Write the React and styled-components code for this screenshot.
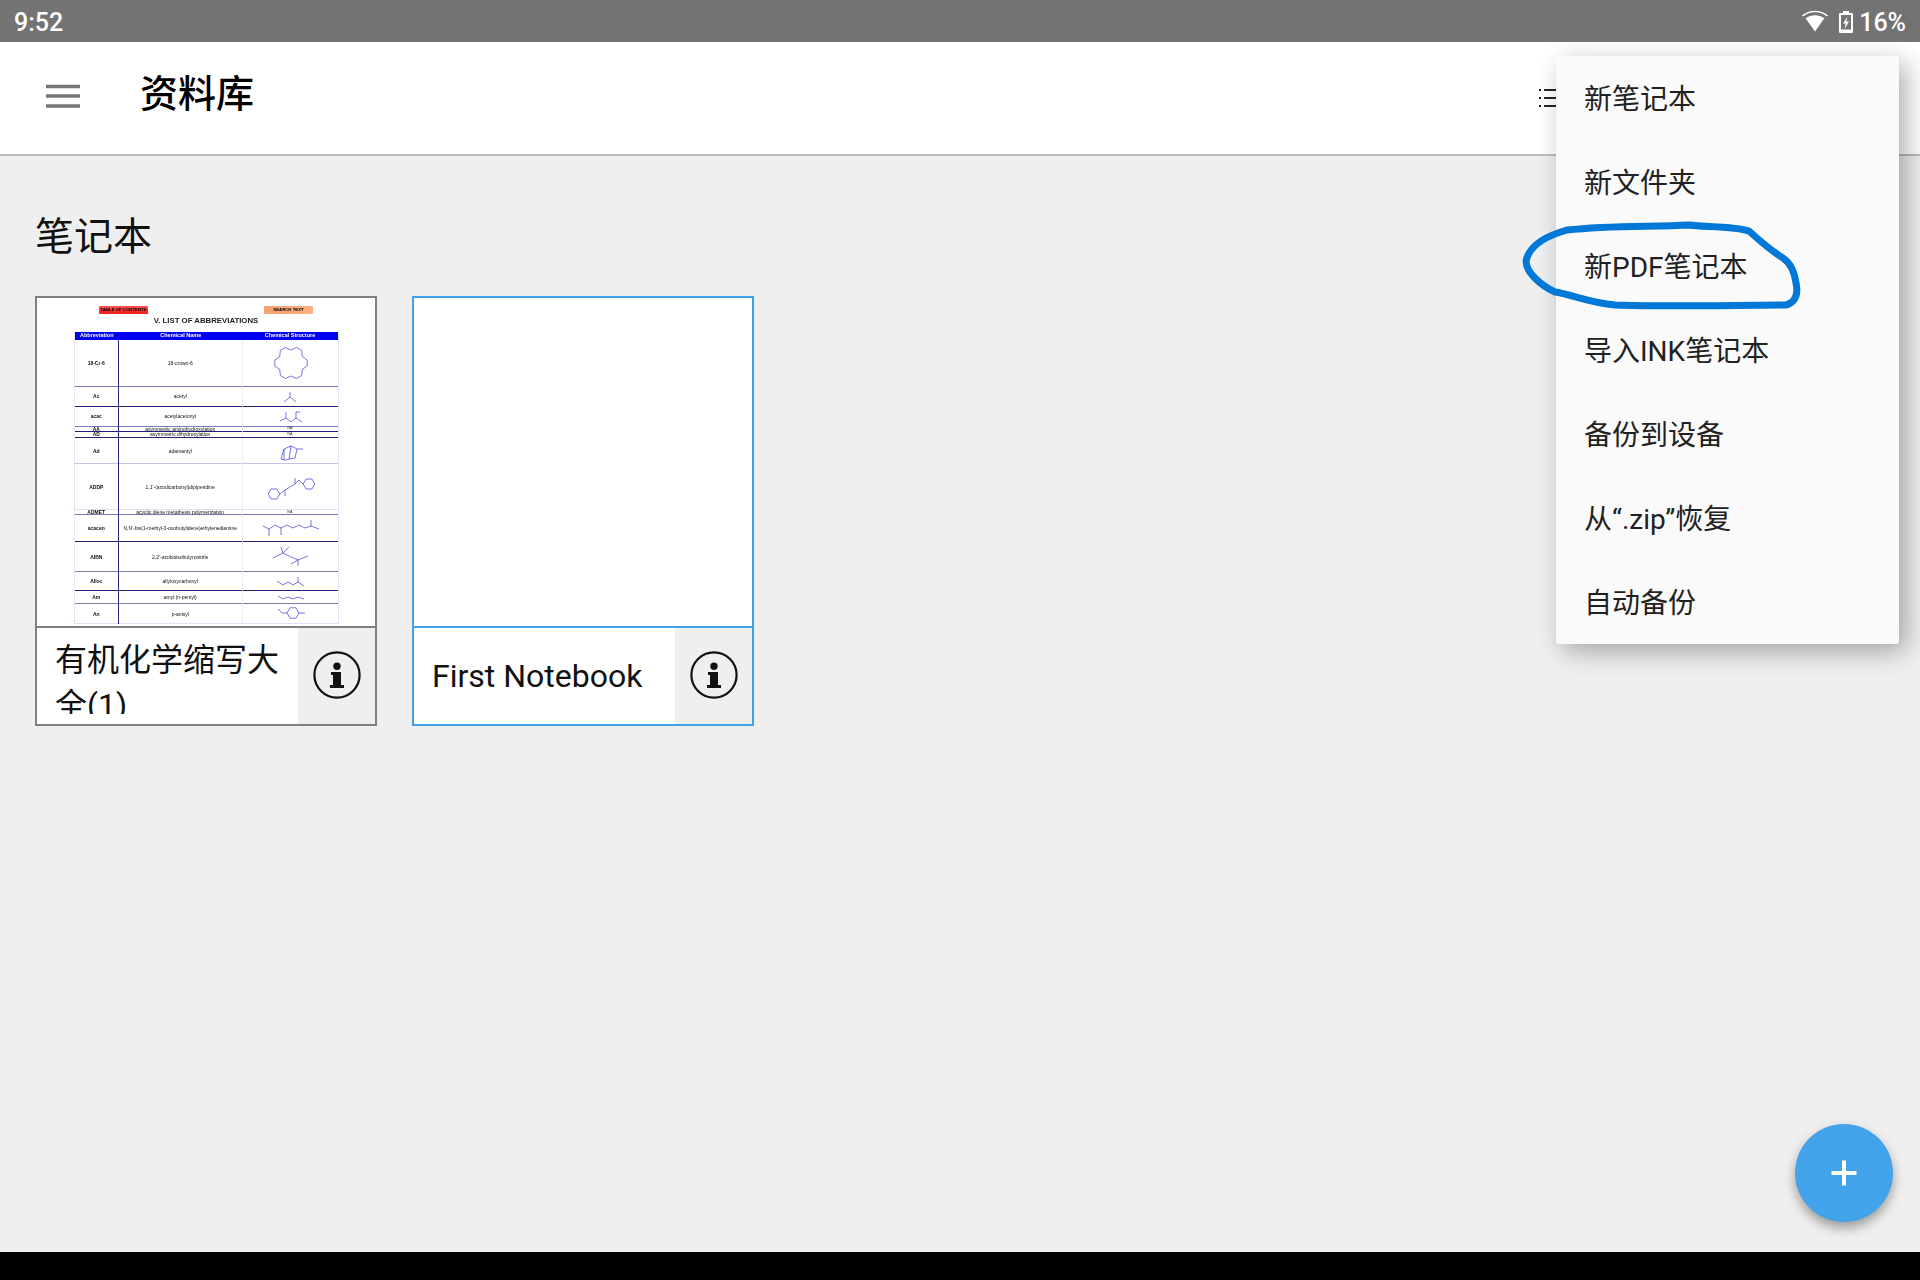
import React from "react"
import styled, { createGlobalStyle } from "styled-components"

const Global = createGlobalStyle`
  html, body {
    margin: 0;
    padding: 0;
    background: #000;
  }
  * {
    box-sizing: border-box;
  }
`

const sans = `Roboto, "Noto Sans CJK SC", sans-serif`
const doc = `"Liberation Sans", sans-serif`

const Screen = styled.div`
  position: relative;
  width: 1920px;
  height: 1280px;
  display: flex;
  flex-direction: column;
  overflow: hidden;
  font-family: ${sans};
  background: #efefef;
`

const StatusBar = styled.div`
  position: relative;
  z-index: 3;
  height: 42px;
  flex: none;
  display: flex;
  align-items: center;
  justify-content: space-between;
  padding: 2px 14px 0;
  background: #737373;
  color: #fff;
  font-size: 25px;
  font-weight: 500;
`

const StatusIcons = styled.div`
  display: flex;
  align-items: center;
  gap: 6px;
`

const WifiSvg = styled.svg`
  margin: 0 5px 2px 0;
  display: block;
`

const AppBar = styled.header`
  height: 114px;
  flex: none;
  display: flex;
  align-items: center;
  padding: 0 357px 0 46px;
  background: #fff;
  border-bottom: 2px solid #bdbdbd;
`

const MenuIcon = styled.svg`
  display: block;
  margin-bottom: 4px;
`

const Title = styled.h1`
  margin: 0 0 9px 60px;
  font-size: 38px;
  font-weight: 500;
  line-height: 1;
  color: #000;
`

const ListButton = styled.svg`
  margin-left: auto;
  display: block;
`

const Main = styled.main`
  flex: 1;
  padding: 0 35px;
`

const Heading = styled.h2`
  height: 140px;
  margin: 0;
  padding-top: 55px;
  font-size: 39px;
  font-weight: 400;
  line-height: 52px;
  color: #111;
`

const Shelf = styled.div`
  display: flex;
  gap: 35px;
`

const Card = styled.article`
  width: 342px;
  height: 430px;
  display: flex;
  flex-direction: column;
  background: #fff;
  border: 2px solid ${p => p.$color};
`

const Thumb = styled.div`
  height: 330px;
  flex: none;
  overflow: hidden;
  background: #fff;
  border-bottom: 2px solid ${p => p.$color};
`

const CardFoot = styled.div`
  flex: 1;
  display: flex;
  align-items: center;
  min-height: 0;
`

const CardName = styled.div`
  flex: 1;
  min-width: 0;
  padding-left: 18px;
  padding-right: 10px;
  font-size: 32px;
  line-height: 44px;
  color: #111;
  ${p => p.$wrapped && "height: 76px; line-height: 44.5px; padding-top: 0; overflow: hidden;"}
`

const InfoButton = styled.div`
  width: 77px;
  height: 100%;
  flex: none;
  display: flex;
  align-items: center;
  justify-content: center;
  padding-bottom: 2px;
  background: #efefef;
`

const Sheet = styled.div`
  width: 338px;
  padding-top: 8px;
  font-family: ${doc};
  color: #111;
  filter: blur(0.35px);
`

const SheetButtons = styled.div`
  height: 8px;
  display: flex;
  gap: 116px;
  padding-left: 62px;
`

const SheetButton = styled.div`
  width: 49px;
  height: 8px;
  border-radius: 1px;
  background: ${p => p.$bg};
  color: #000;
  font-size: 4.3px;
  font-weight: 700;
  line-height: 8px;
  text-align: center;
  white-space: nowrap;
`

const SheetTitle = styled.div`
  height: 18px;
  font-size: 7.8px;
  font-weight: 700;
  line-height: 14px;
  text-align: center;
  color: #222;
`

const Table = styled.div`
  width: 265px;
  margin-left: 36.5px;
  border-left: 1px solid #e4e4f4;
  border-right: 1px solid #e4e4f4;
`

const HeadRow = styled.div`
  height: 7.5px;
  display: grid;
  grid-template-columns: 44.5px 123.5px 1fr;
  background: #0000f0;
  color: #fff;
  font-size: 5.5px;
  font-weight: 700;
  line-height: 7.5px;
  text-align: center;
`

const Row = styled.div`
  height: ${p => p.$h}px;
  display: grid;
  grid-template-columns: 44.5px 123.5px 1fr;
  align-items: stretch;
  border-bottom: 1px solid ${p => p.$line};
  text-align: center;
`

const Abbr = styled.div`
  display: flex;
  align-items: center;
  justify-content: center;
  border-right: 1px solid #26267f;
  font-size: 5px;
  font-weight: 700;
  line-height: 1;
  white-space: nowrap;
`

const ChemName = styled.div`
  display: flex;
  align-items: center;
  justify-content: center;
  border-right: 1px solid #ececf8;
  font-size: 5px;
  line-height: 1;
  white-space: nowrap;
`

const Structure = styled.div`
  display: flex;
  align-items: center;
  justify-content: center;
  font-size: 3.8px;
  line-height: 1;
  color: #333;
`

const Menu = styled.nav`
  position: absolute;
  z-index: 2;
  top: 56px;
  left: 1556px;
  width: 343px;
  background: #fafafa;
  border-radius: 3px;
  box-shadow: 7px 7px 26px rgba(0, 0, 0, 0.32);
`

const MenuItem = styled.div`
  height: 84px;
  display: flex;
  align-items: center;
  padding: 0 0 2px 28px;
  font-size: 28px;
  color: #212121;
`

const Ink = styled.svg`
  position: absolute;
  z-index: 2;
  top: 0;
  left: 0;
  pointer-events: none;
`

const Fab = styled.div`
  position: absolute;
  right: 27px;
  bottom: 58px;
  width: 98px;
  height: 98px;
  display: flex;
  align-items: center;
  justify-content: center;
  border-radius: 50%;
  background: #42a2ea;
  box-shadow: 0 6px 12px rgba(0, 0, 0, 0.35);
`

const NavBar = styled.div`
  height: 28px;
  flex: none;
  background: #000;
`

const ring = (cx, cy, r, n, start = -90) =>
  Array.from({ length: n }, (_, i) => {
    const a = ((start + (360 / n) * i) * Math.PI) / 180
    return `${(cx + r * Math.cos(a)).toFixed(1)} ${(cy + r * Math.sin(a)).toFixed(1)}`
  })
    .join(" L")
    .replace(/^/, "M") + " Z"

const crown = Array.from({ length: 18 }, (_, i) => {
  const a = ((-90 + 20 * i) * Math.PI) / 180
  const r = i % 3 === 0 ? 13 : 16.5
  return `${(48 + r * Math.cos(a)).toFixed(1)} ${(23 + r * Math.sin(a)).toFixed(1)}`
})
  .join(" L")
  .replace(/^/, "M") + " Z"

const molecules = {
  crown,
  acetyl: "M47 5 V10 M47 10 L41 15 M47 10 L53 15",
  acac: "M37 14 L43 11 V5 M43 11 L48 15 L53 11 V5 L57 5 M53 11 L59 15",
  adamantyl: "M38 21 L41 11 L48 8 L54 11 L52 20 L42 22 Z M41 11 V22 M48 8 L46 21 M54 11 H60",
  addp: `${ring(31, 30, 5.8, 6, 0)} ${ring(66, 20, 5.8, 6, 0)} M37 30 L42 26 L42 32 M42 26 L47 23 L52 20 L56 16 L60 20 M52 20 L52 14`,
  acacen: "M20 11 L26 14 V21 M26 14 L32 10 L38 13 V20 M38 13 L44 10 L50 13 L56 10 L62 13 L68 11 V5 M68 11 L76 14",
  aibn: "M30 16 L40 11 L38 5 M40 11 L46 5 M40 11 L48 15 L55 18 L65 14 M55 18 L55 24 M55 18 L48 22",
  alloc: "M34 9 L40 13 L45 10 L50 13 L55 10 V5 M55 10 L61 14",
  amyl: "M35 5 L40 8 L45 6 L50 8 L55 6 L61 8",
  anisyl: `${ring(50, 9, 6, 6, 0)} M35 5 L39 9 L44 9 M56 9 L62 9`,
}

const rows = [
  { abbr: "18-Cr-6", name: "18-crown-6", h: 47.2, line: "#7a7ab4", mol: "crown" },
  { abbr: "Ac", name: "acetyl", h: 20, line: "#1e1e78", mol: "acetyl" },
  { abbr: "acac", name: "acetylacetonyl", h: 20, line: "#7a7ab4", mol: "acac" },
  { abbr: "AA", name: "asymmetric aminohydroxylation", h: 5.6, line: "#1e1e78", na: true },
  { abbr: "AD", name: "asymmetric dihydroxylation", h: 6, line: "#1e1e78", na: true },
  { abbr: "Ad", name: "adamantyl", h: 26, line: "#c4c4e4", mol: "adamantyl" },
  { abbr: "ADDP", name: "1,1'-(azodicarbonyl)dipiperidine", h: 46, line: "#e0e0f4", mol: "addp" },
  { abbr: "ADMET", name: "acyclic diene metathesis polymerization", h: 5, line: "#7a7ab4", na: true },
  { abbr: "acacen", name: "N,N'-bis(1-methyl-3-oxobutylidene)ethylenediamine", h: 27, line: "#1e1e78", mol: "acacen" },
  { abbr: "AIBN", name: "2,2'-azobisisobutyronitrile", h: 30, line: "#7a7ab4", mol: "aibn" },
  { abbr: "Alloc", name: "allyloxycarbonyl", h: 19, line: "#1e1e78", mol: "alloc" },
  { abbr: "Am", name: "amyl (n-pentyl)", h: 13, line: "#7a7ab4", mol: "amyl" },
  { abbr: "An", name: "p-anisyl", h: 20, line: "#e0e0f4", mol: "anisyl" },
]

const menuItems = ["新笔记本", "新文件夹", "新PDF笔记本", "导入INK笔记本", "备份到设备", "从“.zip”恢复", "自动备份"]

const Molecule = ({ name, h }) => (
  <svg width="94" height={h} viewBox={`0 0 94 ${h}`} style={{ overflow: "visible" }} fill="none" stroke="#3a3ad8" strokeWidth="0.7">
    <path d={molecules[name]} />
  </svg>
)

const InfoIcon = () => (
  <svg width="50" height="50" viewBox="0 0 50 50">
    <circle cx="25" cy="25" r="22.6" fill="none" stroke="#111" strokeWidth="2.2" />
    <circle cx="25" cy="16.3" r="3.7" fill="#111" />
    <path d="M19 22 H29 V35 H32 V38 H18 V35 H21 V25 H19 Z" fill="#111" />
  </svg>
)

const WifiIcon = () => (
  <WifiSvg width="26" height="22" viewBox="0 0 26 22">
    <path d="M0.5 6 C7.5 0 18.5 0 25.5 6" fill="none" stroke="#fff" strokeWidth="1.6" />
    <path d="M3.6 8.3 C9 4.4 17 4.4 22.4 8.3 L13 21.5 Z" fill="#fff" />
  </WifiSvg>
)

const BatteryIcon = () => (
  <svg width="14" height="22" viewBox="0 0 14 22">
    <path d="M4 0 H10 V2 H13 Q14 2 14 3 V21 Q14 22 13 22 H1 Q0 22 0 21 V3 Q0 2 1 2 H4 Z M2 4 V18.5 H12 V4 Z" fill="#fff" fillRule="evenodd" />
    <path d="M8.4 5.5 L4 12.5 H6.6 L5.6 18 L10 10.5 H7.3 Z" fill="#fff" />
  </svg>
)

const Hamburger = () => (
  <MenuIcon width="34" height="24" viewBox="0 0 34 24">
    <path d="M0 2.5 H34 M0 12 H34 M0 22 H34" stroke="#757575" strokeWidth="3.4" />
  </MenuIcon>
)

const Abbreviations = () => (
  <Sheet>
    <SheetButtons>
      <SheetButton $bg="linear-gradient(#f55, #f01818)">TABLE OF CONTENTS</SheetButton>
      <SheetButton $bg="linear-gradient(90deg, #f7a070, #ffb080)">SEARCH TEXT</SheetButton>
    </SheetButtons>
    <SheetTitle>V. LIST OF ABBREVIATIONS</SheetTitle>
    <Table>
      <HeadRow>
        <div>Abbreviation</div>
        <div>Chemical Name</div>
        <div>Chemical Structure</div>
      </HeadRow>
      {rows.map(r => (
        <Row key={r.abbr} $h={r.h} $line={r.line}>
          <Abbr>{r.abbr}</Abbr>
          <ChemName>{r.name}</ChemName>
          <Structure>{r.na ? "NA" : <Molecule name={r.mol} h={r.h} />}</Structure>
        </Row>
      ))}
    </Table>
  </Sheet>
)

export default function App() {
  return (
    <Screen>
      <Global />
      <StatusBar>
        <span>9:52</span>
        <StatusIcons>
          <WifiIcon />
          <BatteryIcon />
          <span>16%</span>
        </StatusIcons>
      </StatusBar>
      <AppBar>
        <Hamburger />
        <Title>资料库</Title>
        <ListButton width="24" height="20" viewBox="0 0 24 20">
          <path d="M0 2 H2 M5 2 H24 M0 10 H2 M5 10 H24 M0 18 H2 M5 18 H24" stroke="#222" strokeWidth="2" />
        </ListButton>
      </AppBar>
      <Main>
        <Heading>笔记本</Heading>
        <Shelf>
          <Card $color="#808080">
            <Thumb $color="#808080">
              <Abbreviations />
            </Thumb>
            <CardFoot>
              <CardName $wrapped>有机化学缩写大全(1)</CardName>
              <InfoButton>
                <InfoIcon />
              </InfoButton>
            </CardFoot>
          </Card>
          <Card $color="#42a0e8">
            <Thumb $color="#42a0e8" />
            <CardFoot>
              <CardName>First Notebook</CardName>
              <InfoButton>
                <InfoIcon />
              </InfoButton>
            </CardFoot>
          </Card>
        </Shelf>
      </Main>
      <NavBar />
      <Menu>
        {menuItems.map(item => (
          <MenuItem key={item}>{item}</MenuItem>
        ))}
      </Menu>
      <Ink width="1920" height="1280" viewBox="0 0 1920 1280">
        <path
          d="M1749 231 C1735 226 1700 227 1690 225 C1650 227 1610 225 1567 230 C1550 235 1530 243 1526 261 C1526 272 1540 285 1555 292 C1570 294 1590 303 1615 305 C1660 307 1740 305 1786 305 C1797 302 1798 292 1796 283 C1794 271 1791 264 1783 258 C1770 250 1760 241 1749 231 Z"
          fill="none"
          stroke="#0078d7"
          strokeWidth="7"
          strokeLinejoin="round"
        />
      </Ink>
      <Fab>
        <svg width="26" height="26" viewBox="0 0 26 26">
          <path d="M13 0.5 V25.5 M0.5 13 H25.5" stroke="#fff" strokeWidth="4" />
        </svg>
      </Fab>
    </Screen>
  )
}
